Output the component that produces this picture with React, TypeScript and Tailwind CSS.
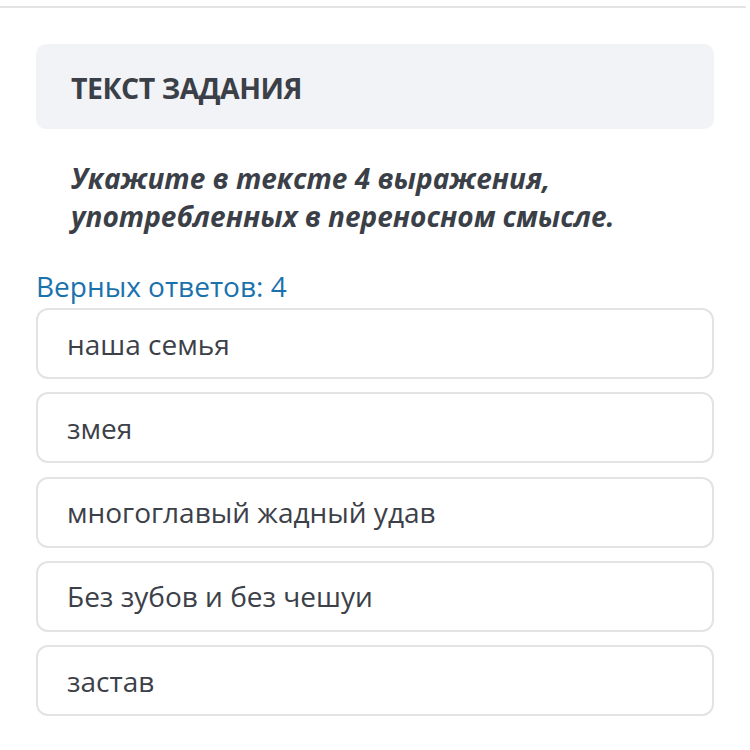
const answers = [
  "наша семья",
  "змея",
  "многоглавый жадный удав",
  "Без зубов и без чешуи",
  "застав",
];

export default function App() {
  return (
    <div
      className="w-[750px] h-[750px] bg-white overflow-hidden"
      style={{ fontFamily: '"Open Sans", "Noto Sans", sans-serif' }}
    >
      {/* top divider */}
      <div className="pt-[6px]">
        <div className="h-[2px] w-[746px] bg-[#e4e4e6]" />
      </div>

      <div className="px-[36px] pt-[36px]">
        {/* header */}
        <div className="h-[85px] bg-[#f2f3f7] rounded-[10px] flex items-center px-[35px] pt-[3px]">
          <span className="text-[28.5px] font-bold text-[#3b3f47] tracking-[-0.5px]">
            ТЕКСТ ЗАДАНИЯ
          </span>
        </div>

        {/* question */}
        <p className="mt-[30px] px-[35px] text-[28px] leading-[38px] font-bold italic text-[#3b3f47]">
          Укажите в тексте 4 выражения,
          <br />
          употребленных в переносном смысле.
        </p>

        <div className="mt-[34px] text-[28px] leading-[34px] text-[#1a72ad]">
          Верных ответов: 4
        </div>

        {/* answer list */}
        <div className="mt-[5px] flex flex-col gap-[13.25px]">
          {answers.map((a) => (
            <div
              key={a}
              className="h-[71px] border-2 border-[#e3e3e3] rounded-[12px] flex items-center px-[29px] text-[28px] text-[#3c4048]"
            >
              {a}
            </div>
          ))}
        </div>
      </div>
    </div>
  );
}
